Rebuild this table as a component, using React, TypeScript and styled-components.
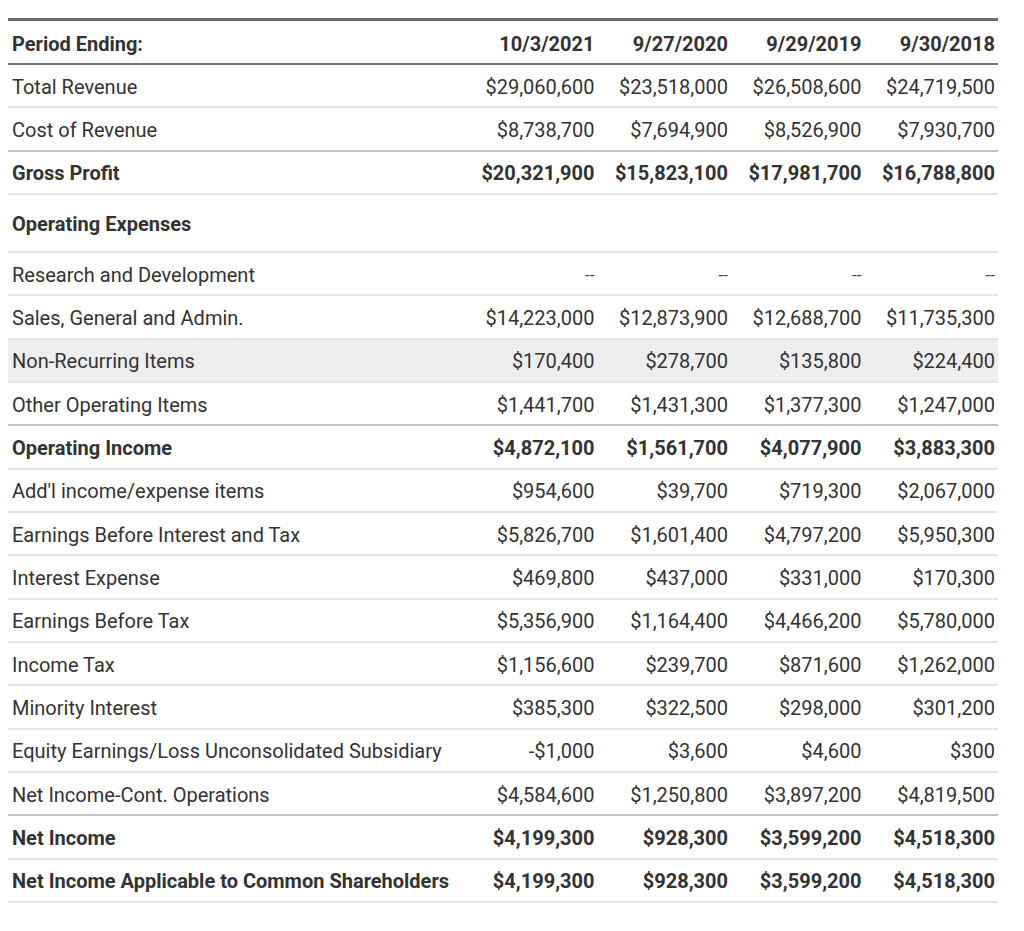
import styled, { createGlobalStyle } from 'styled-components';

type Row = {
  label: string;
  values: string[];
  bold?: boolean;
  section?: boolean;
  shaded?: boolean;
  rule?: boolean;
};

const periods = ['10/3/2021', '9/27/2020', '9/29/2019', '9/30/2018'];

const rows: Row[] = [
  { label: 'Total Revenue', values: ['$29,060,600', '$23,518,000', '$26,508,600', '$24,719,500'] },
  { label: 'Cost of Revenue', values: ['$8,738,700', '$7,694,900', '$8,526,900', '$7,930,700'], rule: true },
  { label: 'Gross Profit', values: ['$20,321,900', '$15,823,100', '$17,981,700', '$16,788,800'], bold: true },
  { label: 'Operating Expenses', values: ['', '', '', ''], bold: true, section: true },
  { label: 'Research and Development', values: ['--', '--', '--', '--'] },
  { label: 'Sales, General and Admin.', values: ['$14,223,000', '$12,873,900', '$12,688,700', '$11,735,300'] },
  { label: 'Non-Recurring Items', values: ['$170,400', '$278,700', '$135,800', '$224,400'], shaded: true },
  { label: 'Other Operating Items', values: ['$1,441,700', '$1,431,300', '$1,377,300', '$1,247,000'], rule: true },
  { label: 'Operating Income', values: ['$4,872,100', '$1,561,700', '$4,077,900', '$3,883,300'], bold: true },
  { label: "Add'l income/expense items", values: ['$954,600', '$39,700', '$719,300', '$2,067,000'] },
  { label: 'Earnings Before Interest and Tax', values: ['$5,826,700', '$1,601,400', '$4,797,200', '$5,950,300'] },
  { label: 'Interest Expense', values: ['$469,800', '$437,000', '$331,000', '$170,300'] },
  { label: 'Earnings Before Tax', values: ['$5,356,900', '$1,164,400', '$4,466,200', '$5,780,000'] },
  { label: 'Income Tax', values: ['$1,156,600', '$239,700', '$871,600', '$1,262,000'] },
  { label: 'Minority Interest', values: ['$385,300', '$322,500', '$298,000', '$301,200'] },
  { label: 'Equity Earnings/Loss Unconsolidated Subsidiary', values: ['-$1,000', '$3,600', '$4,600', '$300'] },
  { label: 'Net Income-Cont. Operations', values: ['$4,584,600', '$1,250,800', '$3,897,200', '$4,819,500'], rule: true },
  { label: 'Net Income', values: ['$4,199,300', '$928,300', '$3,599,200', '$4,518,300'], bold: true },
  { label: 'Net Income Applicable to Common Shareholders', values: ['$4,199,300', '$928,300', '$3,599,200', '$4,518,300'], bold: true },
];

const App = () => {
  return (
    <>
      <GlobalStyle />
      <Page>
        <Table>
          <colgroup>
            <col style={{ width: '456px' }} />
            {periods.map((p) => (
              <col key={p} style={{ width: '133.5px' }} />
            ))}
          </colgroup>
          <thead>
            <tr>
              <HeadCell>Period Ending:</HeadCell>
              {periods.map((p) => (
                <HeadCell key={p} $num>
                  {p}
                </HeadCell>
              ))}
            </tr>
          </thead>
          <tbody>
            {rows.map((r) => (
              <BodyRow key={r.label} $shaded={r.shaded}>
                <Cell $bold={r.bold} $section={r.section} $rule={r.rule}>
                  {r.label}
                </Cell>
                {r.values.map((v, i) => (
                  <Cell key={i} $num $bold={r.bold} $section={r.section} $rule={r.rule} $dash={v === '--'}>
                    {v}
                  </Cell>
                ))}
              </BodyRow>
            ))}
          </tbody>
        </Table>
      </Page>
    </>
  );
};

export default App;

const GlobalStyle = createGlobalStyle`
  body {
    margin: 0;
    background: #ffffff;
    font-family: Roboto, 'Liberation Sans', Arial, sans-serif;
    color: #333333;
  }
`;

const Page = styled.div`
  padding: 18px 26px 0 8px;
`;

const Table = styled.table`
  width: 990px;
  table-layout: fixed;
  border-collapse: separate;
  border-spacing: 0;
  font-size: 20px;
  line-height: 24px;
`;

const HeadCell = styled.th<{ $num?: boolean }>`
  box-sizing: border-box;
  height: 47px;
  padding: 3px 3px 0 4px;
  border-top: 3px solid #6b6b6b;
  border-bottom: 2px solid #757575;
  text-align: ${(p) => (p.$num ? 'right' : 'left')};
  font-weight: 700;
  color: #333333;
  vertical-align: middle;
  white-space: nowrap;
`;

const BodyRow = styled.tr<{ $shaded?: boolean }>`
  background: ${(p) => (p.$shaded ? '#eeeeee' : 'transparent')};
`;

const Cell = styled.td<{
  $num?: boolean;
  $bold?: boolean;
  $section?: boolean;
  $rule?: boolean;
  $dash?: boolean;
}>`
  box-sizing: border-box;
  height: ${(p) => (p.$section ? '58px' : '43.33px')};
  padding: 2px 3px 0 4px;
  border-bottom: 2px solid ${(p) => (p.$rule ? '#c2c2c2' : '#e4e4e4')};
  text-align: ${(p) => (p.$num ? 'right' : 'left')};
  font-weight: ${(p) => (p.$bold ? 700 : 400)};
  font-size: ${(p) => (p.$dash ? '17px' : '20px')};
  color: ${(p) => (p.$dash ? '#444444' : '#333333')};
  vertical-align: middle;
  white-space: nowrap;
`;
